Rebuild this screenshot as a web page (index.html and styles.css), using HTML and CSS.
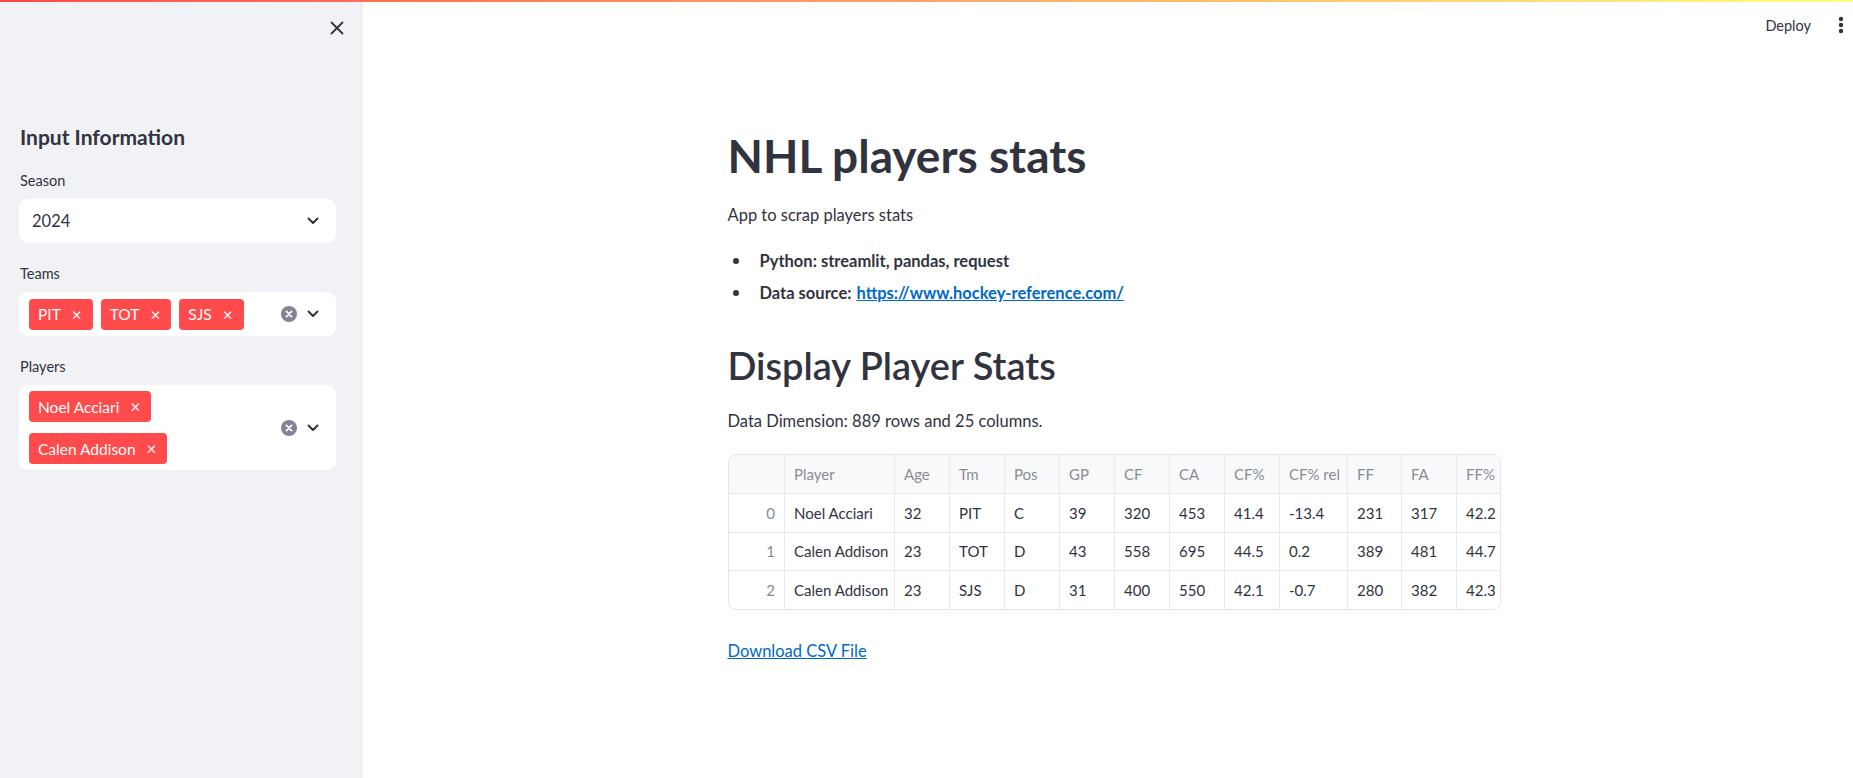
FILE: index.html
```html
<!DOCTYPE html>
<html>
<head>
<meta charset="utf-8">
<link rel="stylesheet" href="styles.css">
</head>
<body>
<div class="decoration"></div>
<div class="app">
  <aside class="sidebar">
    <div class="sb-top">
      <button class="icon-btn" aria-label="Close sidebar">
        <svg width="16" height="16" viewBox="0 0 16 16"><path d="M2.5 2.5 L13.5 13.5 M13.5 2.5 L2.5 13.5" stroke="#31333f" stroke-width="1.8" stroke-linecap="round" fill="none"/></svg>
      </button>
    </div>
    <h3 class="sb-title">Input Information</h3>

    <label class="field-label">Season</label>
    <div class="select">
      <span class="select-value">2024</span>
      <span class="select-icons">
        <svg class="chev" width="12" height="8" viewBox="0 0 12 8"><path d="M1.5 1.5 L6 6 L10.5 1.5" stroke="#31333f" stroke-width="2" fill="none" stroke-linecap="round" stroke-linejoin="round"/></svg>
      </span>
    </div>

    <label class="field-label">Teams</label>
    <div class="select multi">
      <div class="tags">
        <span class="tag">PIT<span class="tag-x">×</span></span>
        <span class="tag">TOT<span class="tag-x">×</span></span>
        <span class="tag">SJS<span class="tag-x">×</span></span>
      </div>
      <span class="select-icons">
        <svg width="16" height="16" viewBox="0 0 16 16"><circle cx="8" cy="8" r="8" fill="#808495"/><path d="M5.4 5.4 L10.6 10.6 M10.6 5.4 L5.4 10.6" stroke="#fff" stroke-width="1.8" stroke-linecap="round"/></svg>
        <svg class="chev" width="12" height="8" viewBox="0 0 12 8"><path d="M1.5 1.5 L6 6 L10.5 1.5" stroke="#31333f" stroke-width="2" fill="none" stroke-linecap="round" stroke-linejoin="round"/></svg>
      </span>
    </div>

    <label class="field-label">Players</label>
    <div class="select multi">
      <div class="tags">
        <span class="tag">Noel Acciari<span class="tag-x">×</span></span>
        <span class="tag">Calen Addison<span class="tag-x">×</span></span>
      </div>
      <span class="select-icons">
        <svg width="16" height="16" viewBox="0 0 16 16"><circle cx="8" cy="8" r="8" fill="#808495"/><path d="M5.4 5.4 L10.6 10.6 M10.6 5.4 L5.4 10.6" stroke="#fff" stroke-width="1.8" stroke-linecap="round"/></svg>
        <svg class="chev" width="12" height="8" viewBox="0 0 12 8"><path d="M1.5 1.5 L6 6 L10.5 1.5" stroke="#31333f" stroke-width="2" fill="none" stroke-linecap="round" stroke-linejoin="round"/></svg>
      </span>
    </div>
  </aside>

  <main class="main">
    <header class="topbar">
      <span class="deploy">Deploy</span>
      <svg class="menu" width="6" height="18" viewBox="0 0 6 18"><circle cx="3" cy="3" r="2.2" fill="#31333f"/><circle cx="3" cy="9" r="2.2" fill="#31333f"/><circle cx="3" cy="15" r="2.2" fill="#31333f"/></svg>
    </header>
    <div class="content-wrap">
      <section class="content">
        <h1 class="title">NHL players stats</h1>
        <p class="text">App to scrap players stats</p>
        <ul class="list">
          <li>Python: streamlit, pandas, request</li>
          <li>Data source: <a href="#">https://www.hockey-reference.com/</a></li>
        </ul>
        <h2 class="subtitle">Display Player Stats</h2>
        <p class="text dim">Data Dimension: 889 rows and 25 columns.</p>
        <div class="table-wrap">
          <table class="df">
            <colgroup>
              <col class="c-idx"><col class="c-player"><col class="c-std"><col class="c-std"><col class="c-std"><col class="c-std"><col class="c-std"><col class="c-std"><col class="c-std"><col class="c-rel"><col class="c-ff"><col class="c-std"><col class="c-last">
            </colgroup>
            <thead>
              <tr><th></th><th>Player</th><th>Age</th><th>Tm</th><th>Pos</th><th>GP</th><th>CF</th><th>CA</th><th>CF%</th><th>CF% rel</th><th>FF</th><th>FA</th><th>FF%</th></tr>
            </thead>
            <tbody>
              <tr><td class="idx">0</td><td>Noel Acciari</td><td>32</td><td>PIT</td><td>C</td><td>39</td><td>320</td><td>453</td><td>41.4</td><td>-13.4</td><td>231</td><td>317</td><td>42.2</td></tr>
              <tr><td class="idx">1</td><td>Calen Addison</td><td>23</td><td>TOT</td><td>D</td><td>43</td><td>558</td><td>695</td><td>44.5</td><td>0.2</td><td>389</td><td>481</td><td>44.7</td></tr>
              <tr><td class="idx">2</td><td>Calen Addison</td><td>23</td><td>SJS</td><td>D</td><td>31</td><td>400</td><td>550</td><td>42.1</td><td>-0.7</td><td>280</td><td>382</td><td>42.3</td></tr>
            </tbody>
          </table>
        </div>
        <p class="text dl"><a href="#">Download CSV File</a></p>
      </section>
    </div>
  </main>
</div>
</body>
</html>
```

FILE: styles.css
```css
* { box-sizing: border-box; }
html, body { margin: 0; padding: 0; height: 100%; }
body {
  font-family: "Lato", "Liberation Sans", sans-serif;
  color: #31333f;
  background: #ffffff;
  overflow: hidden;
}
.decoration {
  height: 2px;
  background: linear-gradient(90deg, #ff4b4b, #fffd80);
}
.app {
  display: flex;
  height: calc(100% - 2px);
}
.sidebar {
  width: 363px;
  flex: 0 0 363px;
  background: #f0f2f6;
  padding: 0 27px 0 19px;
}
.sb-top {
  height: 52px;
  display: flex;
  justify-content: flex-end;
  align-items: center;
  margin-right: -13px;
}
.icon-btn {
  border: 0;
  background: transparent;
  padding: 4px;
  display: flex;
  cursor: pointer;
}
.sb-title {
  margin: 70px 0 0 1px;
  font-size: 21px;
  line-height: 26px;
  font-weight: 700;
}
.field-label {
  display: block;
  font-size: 14.5px;
  line-height: 20px;
  margin: 21px 0 8px 1px;
}
.select {
  background: #fff;
  border-radius: 9px;
  min-height: 44px;
  display: flex;
  align-items: center;
  padding: 0 17px 0 13px;
}
.select-value {
  flex: 1;
  font-size: 16.5px;
}
.select-icons {
  display: flex;
  align-items: center;
  gap: 10px;
  margin-left: auto;
}
.multi {
  padding: 6px 17px 6px 10px;
}
.tags {
  width: 242px;
  display: flex;
  flex-wrap: wrap;
  gap: 11px 8px;
}
.tag {
  background: #ff4b4b;
  color: #fff;
  border-radius: 4px;
  height: 31px;
  padding: 0 11px 0 9px;
  display: inline-flex;
  align-items: center;
  font-size: 15.5px;
}
.tag-x {
  margin-left: 11px;
  font-size: 17px;
  line-height: 1;
}
.main {
  flex: 1;
  display: flex;
  flex-direction: column;
  min-width: 0;
}
.topbar {
  height: 46px;
  display: flex;
  justify-content: flex-end;
  align-items: center;
  padding-right: 9px;
  gap: 27px;
}
.deploy {
  font-size: 14.5px;
}
.content-wrap {
  display: flex;
  justify-content: center;
  padding-left: 12px;
}
.content {
  width: 773px;
}
.title {
  margin: 80px 0 0;
  font-size: 46px;
  line-height: 56px;
  font-weight: 700;
}
.text {
  margin: 17px 0 0;
  font-size: 16.5px;
  line-height: 28px;
}
.list {
  margin: 18px 0 0;
  padding: 0;
  list-style: none;
  font-size: 16.5px;
  line-height: 28px;
  font-weight: 700;
}
.list li {
  display: flex;
}
.list li::before {
  content: "";
  flex: 0 0 auto;
  width: 6px;
  height: 6px;
  border-radius: 50%;
  background: #31333f;
  margin: 11px 21px 0 5px;
}
.list li + li { margin-top: 4px; }
.list a { margin-left: 5px; }
a { color: #0068c9; text-decoration: underline; }
.subtitle {
  margin: 34px 0 0;
  font-size: 38px;
  line-height: 48px;
  font-weight: 600;
}
.dim { margin-top: 18px; }
.table-wrap {
  margin-top: 19px;
  width: 773px;
  border: 1px solid #e4e5ea;
  border-radius: 8px;
  overflow: hidden;
}
.df {
  border-collapse: collapse;
  table-layout: fixed;
  width: 743px;
  font-size: 15px;
}
.c-idx { width: 56px; }
.c-player { width: 110px; }
.c-std { width: 55px; }
.c-rel { width: 68px; }
.c-ff { width: 54px; }
.c-last { width: 70px; }
.df th, .df td {
  height: 38.5px;
  padding: 0 9px;
  text-align: left;
  border-right: 1px solid #e8e9ed;
  border-bottom: 1px solid #e8e9ed;
  white-space: nowrap;
  overflow: hidden;
}
.df tbody tr:last-child td { border-bottom: 0; }
.df th {
  background: #f8f9fb;
  color: #8a8c94;
  font-weight: 400;
}
.df td.idx {
  text-align: right;
  color: #8a8c94;
}
.dl { margin-top: 27px; }
```
